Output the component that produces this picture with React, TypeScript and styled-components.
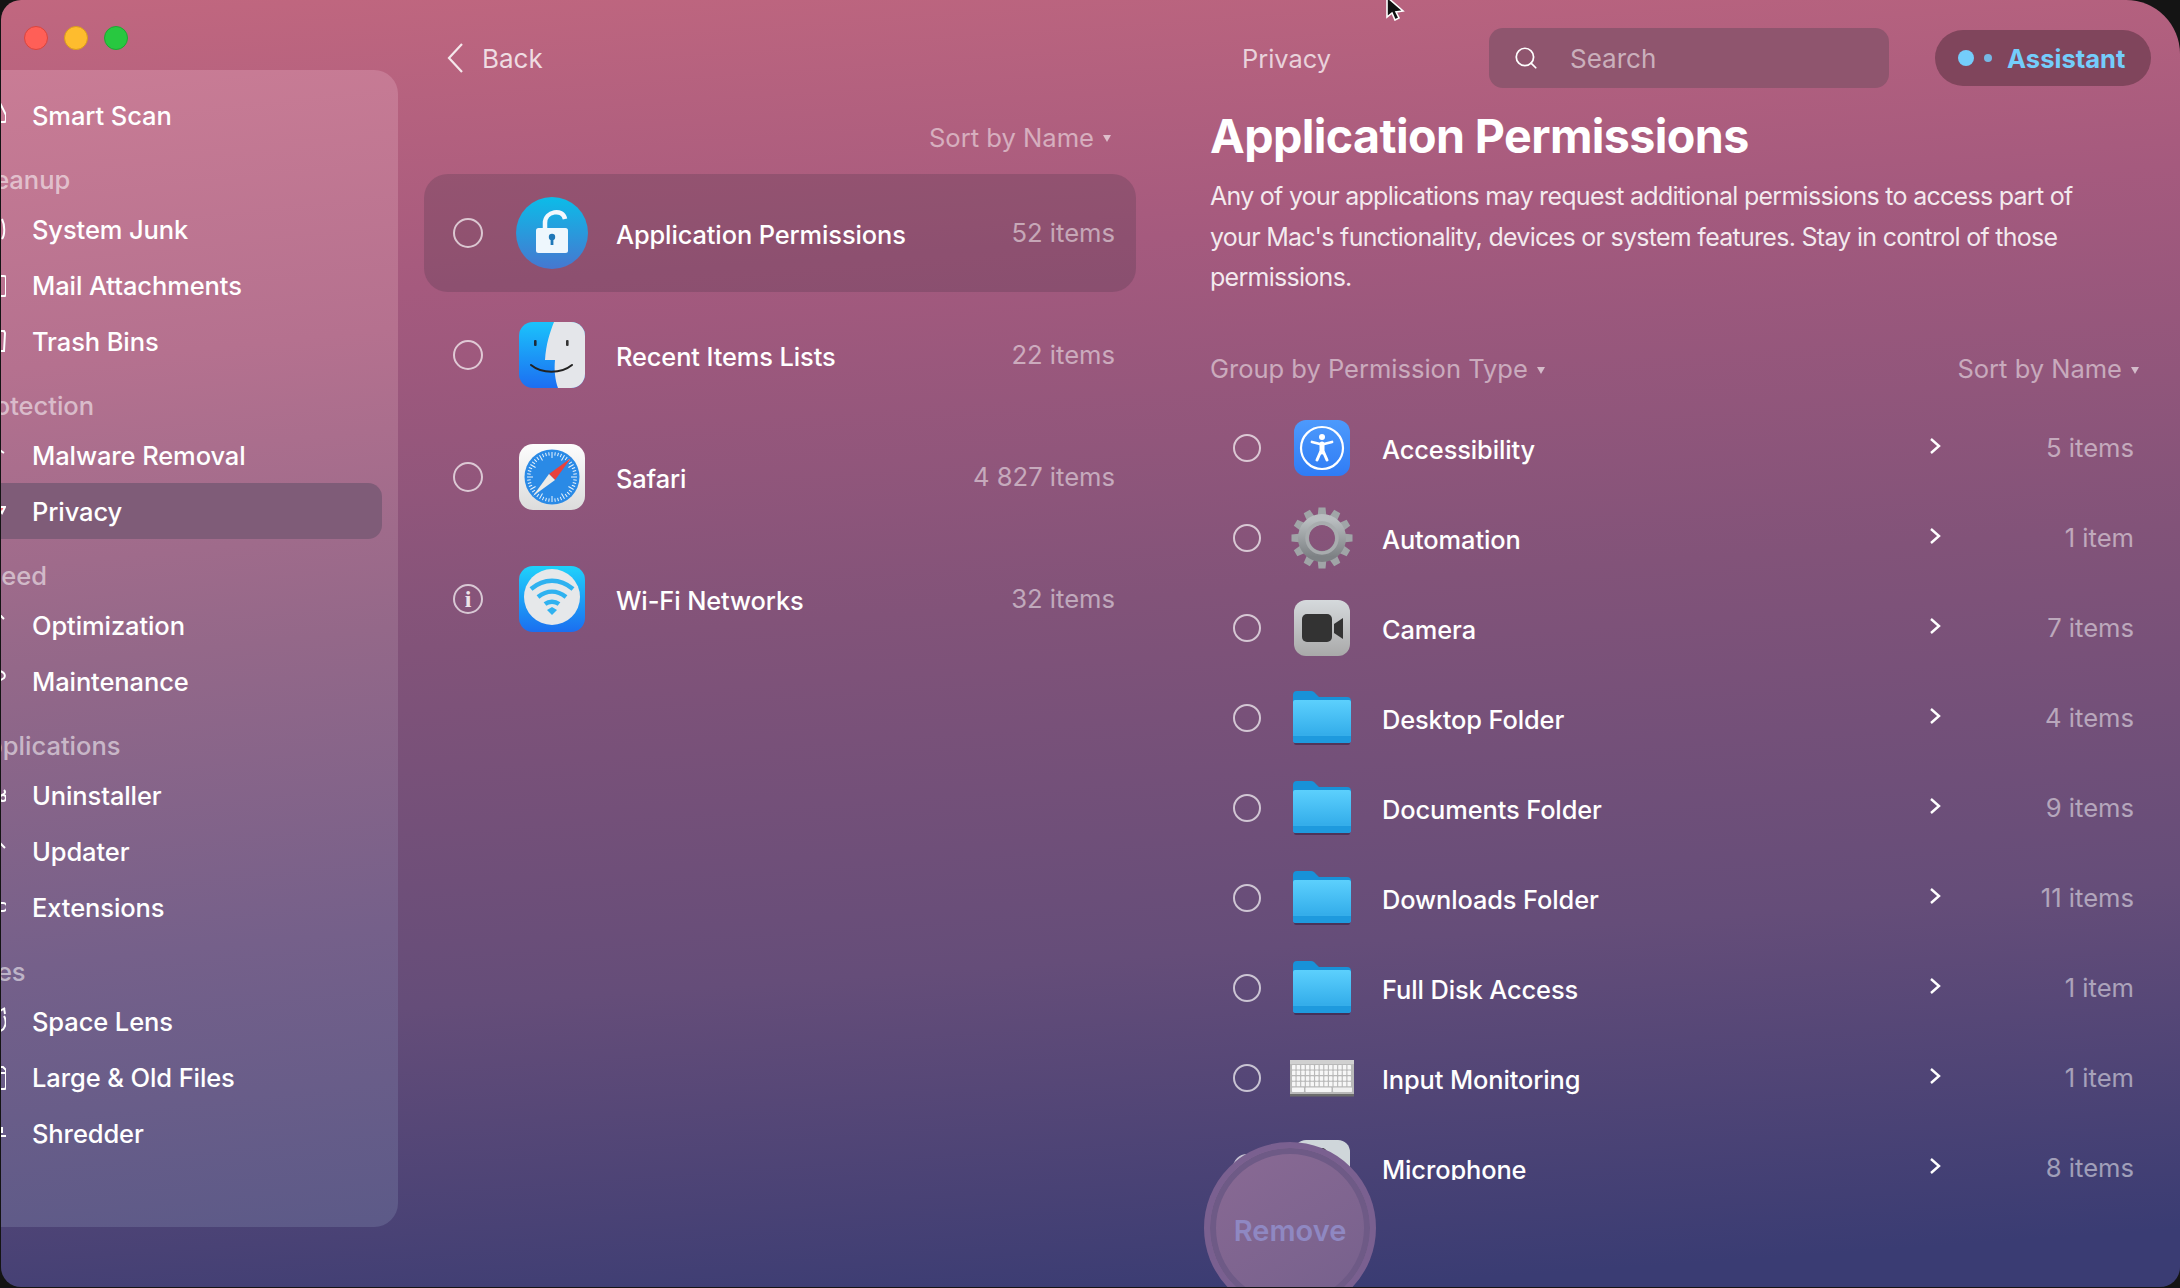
import React from "react";
import styled, { createGlobalStyle } from "styled-components";
import { Search as SearchGlyph } from "lucide-react";

const GlobalStyle = createGlobalStyle`
	html, body {
		margin: 0;
		padding: 0;
		background: #141414;
	}
	body {
		font-family: Inter, "Liberation Sans", sans-serif;
		-webkit-font-smoothing: antialiased;
	}
`;

const Page = styled.div`
	width: 2180px;
	height: 1288px;
	overflow: hidden;
	background: #141414;
`;

const Window = styled.div`
	position: relative;
	margin-left: 1px;
	width: 2179px;
	height: 1287px;
	display: grid;
	grid-template-columns: 397px 738px 1fr;
	overflow: hidden;
	border-radius: 20px 54px 20px 20px;
	background: linear-gradient(176deg, #c1677f 0%, #a55a7e 22%, #825379 47%, #654d79 72%, #3a3c73 96%);
`;

const LeftColumn = styled.div`
	display: flex;
	flex-direction: column;
`;

const TrafficRow = styled.div`
	height: 70px;
	display: flex;
	gap: 16px;
	padding: 26px 0 0 23px;
	box-sizing: border-box;
`;

const Light = styled.span<{ $color: string; $edge: string }>`
	width: 24px;
	height: 24px;
	border-radius: 50%;
	box-sizing: border-box;
	background: ${(p) => p.$color};
	border: 1px solid ${(p) => p.$edge};
`;

const Sidebar = styled.nav`
	height: 1157px;
	margin-left: -1px;
	padding-top: 17px;
	box-sizing: border-box;
	overflow: hidden;
	border-radius: 0 24px 24px 0;
	background: linear-gradient(174deg, #c97c95 0%, #b5718f 25%, #946889 50%, #75608a 75%, #5c5a88 100%);
`;

const SideSection = styled.div`
	height: 44px;
	margin: 14px 0 0 -31px;
	display: flex;
	align-items: center;
	font-size: 25.5px;
	font-weight: 500;
	color: rgba(255, 255, 255, 0.55);
`;

const SideItem = styled.div<{ $active?: boolean }>`
	height: 56px;
	width: 382px;
	display: flex;
	align-items: center;
	gap: 26px;
	box-sizing: border-box;
	border-radius: 0 14px 14px 0;
	font-size: 25.5px;
	font-weight: 500;
	letter-spacing: -0.1px;
	color: #fff;
	background: ${(p) => (p.$active ? "#7f5c78" : "transparent")};
`;

const SideIcon = styled.svg`
	margin-left: -30px;
	width: 36px;
	height: 36px;
	flex: none;
	fill: none;
	stroke: #fff;
	stroke-width: 2;
`;

const MiddleColumn = styled.section`
	margin-left: 26px;
	width: 712px;
	display: flex;
	flex-direction: column;
`;

const BackRow = styled.div`
	margin-top: 28px;
	height: 60px;
	display: flex;
	align-items: center;
	gap: 19px;
	padding-left: 23px;
	font-size: 26px;
	color: rgba(255, 255, 255, 0.78);
`;

const BackChevron = styled.svg`
	flex: none;
	fill: none;
	stroke: rgba(255, 255, 255, 0.85);
	stroke-width: 2.2;
`;

const SortRow = styled.div`
	margin-top: 28px;
	height: 42px;
	display: flex;
	justify-content: flex-end;
	align-items: center;
	gap: 9px;
	padding-right: 25px;
	font-size: 25.6px;
	color: rgba(255, 255, 255, 0.5);
`;

const Caret = styled.span`
	width: 0;
	height: 0;
	border-left: 4px solid transparent;
	border-right: 4px solid transparent;
	border-top: 7px solid rgba(255, 255, 255, 0.6);
	margin-top: 3px;
`;

const AppList = styled.div`
	margin-top: 16px;
	display: flex;
	flex-direction: column;
	gap: 4px;
`;

const AppRow = styled.div<{ $active?: boolean }>`
	height: 118px;
	display: flex;
	align-items: center;
	box-sizing: border-box;
	padding: 0 21px 0 29px;
	border-radius: 24px;
	background: ${(p) => (p.$active ? "rgba(70, 50, 70, 0.25)" : "transparent")};
`;

const Radio = styled.span<{ $size: number }>`
	width: ${(p) => p.$size}px;
	height: ${(p) => p.$size}px;
	flex: none;
	box-sizing: border-box;
	border: 2px solid rgba(255, 255, 255, 0.68);
	border-radius: 50%;
`;

const InfoMark = styled(Radio)`
	display: flex;
	align-items: center;
	justify-content: center;
	font-family: "Liberation Serif", serif;
	font-size: 24px;
	font-weight: 700;
	color: rgba(255, 255, 255, 0.85);
`;

const AppIconSlot = styled.div`
	width: 72px;
	height: 72px;
	flex: none;
	margin: 0 28px 0 33px;
	svg {
		display: block;
	}
`;

const AppName = styled.span`
	flex: 1;
	padding-top: 2px;
	font-size: 25.4px;
	font-weight: 500;
	letter-spacing: -0.1px;
	color: #fff;
`;

const Count = styled.span`
	margin-top: -1px;
	font-size: 25.6px;
	color: rgba(255, 255, 255, 0.5);
`;

const RightColumn = styled.section`
	margin-left: 74px;
	display: flex;
	flex-direction: column;
	min-width: 0;
`;

const TopBar = styled.header`
	margin-top: 28px;
	height: 60px;
	display: flex;
	align-items: center;
`;

const BarTitle = styled.span`
	margin-left: 32px;
	width: 247px;
	flex: none;
	font-size: 25.4px;
	color: rgba(255, 255, 255, 0.72);
`;

const SearchBox = styled.div`
	width: 400px;
	height: 60px;
	flex: none;
	display: flex;
	align-items: center;
	gap: 31px;
	padding-left: 24px;
	box-sizing: border-box;
	border-radius: 14px;
	font-size: 26px;
	color: rgba(255, 255, 255, 0.55);
	background: #8f556e;
`;

const AssistantPill = styled.div`
	margin-left: 46px;
	width: 216px;
	height: 56px;
	flex: none;
	display: flex;
	align-items: center;
	box-sizing: border-box;
	padding-left: 23px;
	border-radius: 28px;
	font-size: 25.6px;
	font-weight: 700;
	color: #74cdfb;
	background: #80455c;
`;

const BigDot = styled.span`
	width: 16px;
	height: 16px;
	border-radius: 50%;
	background: #74cdfb;
`;

const SmallDot = styled.span`
	width: 8px;
	height: 8px;
	margin: 0 15px 0 10px;
	border-radius: 50%;
	background: #74cdfb;
	opacity: 0.85;
`;

const Title = styled.h1`
	margin: 20px 0 0;
	height: 56px;
	line-height: 56px;
	font-size: 46.6px;
	font-weight: 700;
	letter-spacing: -0.6px;
	color: #fff;
`;

const Intro = styled.p`
	margin: 12px 0 0;
	width: 880px;
	font-size: 25px;
	line-height: 40.5px;
	letter-spacing: -0.72px;
	color: rgba(255, 255, 255, 0.88);
`;

const GroupRow = styled.div`
	margin-top: 51px;
	height: 40px;
	display: flex;
	align-items: center;
	gap: 9px;
	padding-right: 41px;
	font-size: 25.5px;
	color: rgba(255, 255, 255, 0.5);
`;

const GroupSort = styled.div`
	margin-left: auto;
	display: flex;
	align-items: center;
	gap: 9px;
`;

const PermissionList = styled.div`
	margin-top: 14px;
	height: 777px;
	overflow: hidden;
`;

const PermissionRow = styled.div`
	height: 90px;
	display: flex;
	align-items: center;
	box-sizing: border-box;
	padding: 0 46px 0 23px;
`;

const PermissionIconSlot = styled.div`
	width: 64px;
	height: 64px;
	flex: none;
	margin: 0 28px 0 29px;
	display: flex;
	align-items: center;
	justify-content: center;
	svg {
		display: block;
	}
`;

const PermissionName = styled(AppName)`
	padding-top: 3px;
`;

const RowChevron = styled.svg`
	flex: none;
	margin: -3px 3px 0 0;
	fill: none;
	stroke: #fff;
	stroke-width: 2.4;
`;

const PermissionCount = styled(Count)`
	width: 190px;
	flex: none;
	text-align: right;
`;

const RemoveButton = styled.button`
	position: absolute;
	left: 1203px;
	top: 1142px;
	width: 172px;
	height: 172px;
	box-sizing: border-box;
	border: 6px solid #7a6090;
	border-radius: 50%;
	padding: 5px 0 0;
	font-family: Inter, "Liberation Sans", sans-serif;
	font-size: 29px;
	font-weight: 600;
	color: #8f88c2;
	background: linear-gradient(150deg, #8a6a94 0%, #75608c 100%);
	box-shadow: inset 0 0 0 6px #6e5a86;
`;

const Cursor = styled.svg`
	position: absolute;
	left: 1383px;
	top: -3px;
`;

const LockIcon = () => (
	<svg width="72" height="72" viewBox="0 0 72 72">
		<defs>
			<linearGradient id="lockBg" x1="0" y1="0" x2="0" y2="1">
				<stop offset="0" stopColor="#0cbce8" />
				<stop offset="1" stopColor="#4677d0" />
			</linearGradient>
		</defs>
		<circle cx="36" cy="36" r="36" fill="url(#lockBg)" />
		<path d="M29 34v-8c0-12 18-15 20-4" fill="none" stroke="#f2f8fd" strokeWidth="4.5" />
		<rect x="20" y="31" width="32" height="25" rx="2.5" fill="#eef7fd" />
		<circle cx="36" cy="40" r="3.2" fill="#1f78b8" />
		<rect x="34.6" y="40" width="2.8" height="8" fill="#1f78b8" />
	</svg>
);

const FinderIcon = () => (
	<svg width="72" height="72" viewBox="0 0 72 72">
		<defs>
			<linearGradient id="finderBlue" x1="0" y1="0" x2="0" y2="1">
				<stop offset="0" stopColor="#1bc3fb" />
				<stop offset="1" stopColor="#1c6ef2" />
			</linearGradient>
			<clipPath id="finderClip">
				<rect x="3" y="3" width="66" height="66" rx="14" />
			</clipPath>
		</defs>
		<g clipPath="url(#finderClip)">
			<rect x="3" y="3" width="66" height="66" fill="url(#finderBlue)" />
			<path d="M38 3c-4 10-8 22-9 38h10c-1 10 0 20 3 28h27V3z" fill="#e4e6ea" />
		</g>
		<rect x="18" y="21" width="2.6" height="6" rx="1" fill="#1d2b3a" />
		<rect x="50" y="21" width="2.6" height="6" rx="1" fill="#333" />
		<path d="M15 46c11 9 30 9 41 0" fill="none" stroke="#222" strokeWidth="2" strokeLinecap="round" />
	</svg>
);

const SafariIcon = () => (
	<svg width="72" height="72" viewBox="0 0 72 72">
		<defs>
			<linearGradient id="safariTile" x1="0" y1="0" x2="0" y2="1">
				<stop offset="0" stopColor="#fdfdfd" />
				<stop offset="1" stopColor="#dcdcdc" />
			</linearGradient>
		</defs>
		<rect x="3" y="3" width="66" height="66" rx="14" fill="url(#safariTile)" />
		<circle cx="36" cy="36" r="27.5" fill="#2a8ae6" />
		{Array.from({ length: 48 }).map((_, i) => (
			<line
				key={i}
				x1="36"
				y1="11"
				x2="36"
				y2={i % 4 === 0 ? 17 : 14.5}
				stroke="#e9f3fc"
				strokeWidth="1"
				transform={`rotate(${i * 7.5} 36 36)`}
			/>
		))}
		<path d="M55 17L39 39 33 33z" fill="#e8413c" />
		<path d="M17 55L33 33 39 39z" fill="#ecebe8" />
	</svg>
);

const WifiIcon = () => (
	<svg width="72" height="72" viewBox="0 0 72 72">
		<defs>
			<linearGradient id="wifiTile" x1="0" y1="0" x2="0" y2="1">
				<stop offset="0" stopColor="#1fd2fb" />
				<stop offset="1" stopColor="#1b6ef0" />
			</linearGradient>
		</defs>
		<rect x="3" y="3" width="66" height="66" rx="14" fill="url(#wifiTile)" />
		<circle cx="36" cy="34" r="28" fill="#e6e8ea" />
		<g fill="none" stroke="#2fb2f0" strokeWidth="4.5">
			<path d="M15 26c13-11 29-11 42 0" />
			<path d="M22 34c9-7 19-7 28 0" />
			<path d="M29 41c4-3 10-3 14 0" />
		</g>
		<path d="M31 47l5-3 5 3-5 5z" fill="#2fb2f0" />
	</svg>
);

const AccessibilityIcon = () => (
	<svg width="56" height="56" viewBox="0 0 56 56">
		<defs>
			<linearGradient id="a11yTile" x1="0" y1="0" x2="0" y2="1">
				<stop offset="0" stopColor="#4d9afc" />
				<stop offset="1" stopColor="#2f7cf5" />
			</linearGradient>
		</defs>
		<rect width="56" height="56" rx="12" fill="url(#a11yTile)" />
		<circle cx="28" cy="28" r="21" fill="none" stroke="#fff" strokeWidth="2.2" />
		<circle cx="28" cy="17" r="3" fill="#fff" />
		<g fill="none" stroke="#fff" strokeLinecap="round" strokeLinejoin="round">
			<path d="M18 22l10 2.5L38 22" strokeWidth="2.8" />
			<path d="M28 24v8" strokeWidth="5" />
			<path d="M26.5 32L23 40M29.5 32L33 40" strokeWidth="3" />
		</g>
	</svg>
);

const GearIcon = () => (
	<svg width="64" height="64" viewBox="0 0 64 64">
		<defs>
			<linearGradient id="gearFill" x1="0" y1="0" x2="0" y2="1">
				<stop offset="0" stopColor="#b9bec0" />
				<stop offset="1" stopColor="#7d8184" />
			</linearGradient>
		</defs>
		{Array.from({ length: 12 }).map((_, i) => (
			<path key={i} d="M28.5 1.5h7l1 10h-9z" fill="#a0a5a7" transform={`rotate(${i * 30} 32 32)`} />
		))}
		<circle cx="32" cy="32" r="18.5" fill="none" stroke="url(#gearFill)" strokeWidth="11" />
		<circle cx="32" cy="32" r="15" fill="none" stroke="#a8acae" strokeWidth="3.5" />
	</svg>
);

const CameraIcon = () => (
	<svg width="56" height="56" viewBox="0 0 56 56">
		<defs>
			<linearGradient id="cameraTile" x1="0" y1="0" x2="0" y2="1">
				<stop offset="0" stopColor="#d5d9dc" />
				<stop offset="1" stopColor="#a9a9a9" />
			</linearGradient>
		</defs>
		<rect width="56" height="56" rx="12" fill="url(#cameraTile)" />
		<rect x="8" y="14" width="30" height="28" rx="5" fill="#333" />
		<path d="M40 24l9-6v21l-9-6z" fill="#333" />
	</svg>
);

const FolderIcon = ({ id }: { id: string }) => (
	<svg width="60" height="56" viewBox="0 0 60 56">
		<defs>
			<linearGradient id={id} x1="0" y1="0" x2="0" y2="1">
				<stop offset="0" stopColor="#5cd0fd" />
				<stop offset="1" stopColor="#2aa5e6" />
			</linearGradient>
		</defs>
		<rect x="2" y="50" width="56" height="5" rx="2" fill="rgba(40,20,50,0.45)" />
		<path d="M1 5a4 4 0 014-4h14a5 5 0 013 1l5 5h28a4 4 0 014 4v10H1z" fill="#1892d8" />
		<path d="M1 12a2 2 0 012-2h54a2 2 0 012 2v38a3 3 0 01-3 3H4a3 3 0 01-3-3z" fill={`url(#${id})`} />
		<rect x="1" y="43" width="58" height="10" rx="3" fill="#1e9ade" />
		<rect x="1" y="43" width="58" height="3" fill="#35aeea" />
	</svg>
);

const KeyboardIcon = () => (
	<svg width="64" height="40" viewBox="0 0 64 40">
		<rect x="0" y="2" width="64" height="36" rx="1.5" fill="#b9b9b9" />
		<rect x="0" y="2" width="64" height="4" fill="#d0d0d0" />
		<rect x="0" y="36" width="64" height="2.5" fill="#6c6c6c" />
		{[0, 1, 2, 3].map((r) =>
			Array.from({ length: 13 }).map((_, c) => (
				<rect key={`${r}-${c}`} x={2 + c * 4.62} y={7 + r * 5.6} width="3.5" height="4.5" rx="0.6" fill="#f7f7f7" />
			))
		)}
		<rect x="2" y="29.4" width="12" height="4.5" rx="0.6" fill="#f7f7f7" />
		<rect x="15.5" y="29.4" width="26" height="4.5" rx="0.6" fill="#f7f7f7" />
		<rect x="43" y="29.4" width="19" height="4.5" rx="0.6" fill="#f0f0f0" />
	</svg>
);

const MicIcon = () => (
	<svg width="56" height="56" viewBox="0 0 56 56">
		<rect width="56" height="56" rx="12" fill="#cfd6da" />
		<rect x="23" y="8" width="10" height="24" rx="5" fill="#333" />
	</svg>
);

const sideIconPaths: Record<string, React.ReactNode> = {
	scan: <path d="M30 6l6 12v5a2 2 0 01-2 2h-6" />,
	junk: <path d="M32 8c3 6 3 16 0 20" />,
	mail: <path d="M28 9h6a2 2 0 012 2v16a2 2 0 01-2 2h-6" />,
	trash: <path d="M28 8h6l1 2-1 18h-6" />,
	malware: <path d="M28 16l3-2 3 2" />,
	privacy: <path d="M28 14h7l-3 6z" fill="#f5677a" stroke="#fff" />,
	optimize: <path d="M30 8l4 4" />,
	maintain: <path d="M28 8c6 0 8 4 6 7l-5 3" />,
	uninstall: <path d="M33 18a3 3 0 100 6 3 3 0 000-6zm-1 0c3-1 4-3 2-5" />,
	updater: <path d="M28 14l3-3 4 4" />,
	extension: <path d="M28 14h5a4 4 0 010 8h-5" />,
	lens: <path d="M30 8l5-3m-1 8c3 5 2 13-4 15M34 5l1 6" />,
	files: <path d="M28 8h5l3 3v17a2 2 0 01-2 2h-6M28 14h8" />,
	shredder: <path d="M32 12v6M28 21h8" />,
};

const SideRow = ({ icon, label, active }: { icon: string; label: string; active?: boolean }) => (
	<SideItem $active={active}>
		<SideIcon viewBox="0 0 36 36">{sideIconPaths[icon]}</SideIcon>
		{label}
	</SideItem>
);

const sideGroups = [
	{ title: "", items: [["scan", "Smart Scan"]] },
	{ title: "Cleanup", items: [["junk", "System Junk"], ["mail", "Mail Attachments"], ["trash", "Trash Bins"]] },
	{ title: "Protection", items: [["malware", "Malware Removal"], ["privacy", "Privacy"]] },
	{ title: "Speed", items: [["optimize", "Optimization"], ["maintain", "Maintenance"]] },
	{ title: "Applications", items: [["uninstall", "Uninstaller"], ["updater", "Updater"], ["extension", "Extensions"]] },
	{ title: "Files", items: [["lens", "Space Lens"], ["files", "Large & Old Files"], ["shredder", "Shredder"]] },
];

const apps = [
	{ name: "Application Permissions", count: "52 items", icon: <LockIcon />, active: true },
	{ name: "Recent Items Lists", count: "22 items", icon: <FinderIcon /> },
	{ name: "Safari", count: "4 827 items", icon: <SafariIcon /> },
	{ name: "Wi-Fi Networks", count: "32 items", icon: <WifiIcon />, info: true },
];

const permissions = [
	{ name: "Accessibility", count: "5 items", icon: <AccessibilityIcon /> },
	{ name: "Automation", count: "1 item", icon: <GearIcon /> },
	{ name: "Camera", count: "7 items", icon: <CameraIcon /> },
	{ name: "Desktop Folder", count: "4 items", icon: <FolderIcon id="folderA" /> },
	{ name: "Documents Folder", count: "9 items", icon: <FolderIcon id="folderB" /> },
	{ name: "Downloads Folder", count: "11 items", icon: <FolderIcon id="folderC" /> },
	{ name: "Full Disk Access", count: "1 item", icon: <FolderIcon id="folderD" /> },
	{ name: "Input Monitoring", count: "1 item", icon: <KeyboardIcon /> },
	{ name: "Microphone", count: "8 items", icon: <MicIcon /> },
];

const App = () => {
	return (
		<Page>
			<GlobalStyle />
			<Window>
				<LeftColumn>
					<TrafficRow>
						<Light $color="#ff5f57" $edge="#d9453e" />
						<Light $color="#febc2e" $edge="#d99c1c" />
						<Light $color="#28c840" $edge="#1fa732" />
					</TrafficRow>
					<Sidebar>
						{sideGroups.map((group) => (
							<React.Fragment key={group.title || "top"}>
								{group.title && <SideSection>{group.title}</SideSection>}
								{group.items.map(([icon, label]) => (
									<SideRow key={label} icon={icon} label={label} active={label === "Privacy"} />
								))}
							</React.Fragment>
						))}
					</Sidebar>
				</LeftColumn>

				<MiddleColumn>
					<BackRow>
						<BackChevron width="16" height="32" viewBox="0 0 16 32">
							<path d="M15 2L2 16l13 14" />
						</BackChevron>
						Back
					</BackRow>
					<SortRow>
						Sort by Name
						<Caret />
					</SortRow>
					<AppList>
						{apps.map((app) => (
							<AppRow key={app.name} $active={app.active}>
								{app.info ? <InfoMark $size={30}>i</InfoMark> : <Radio $size={30} />}
								<AppIconSlot>{app.icon}</AppIconSlot>
								<AppName>{app.name}</AppName>
								<Count>{app.count}</Count>
							</AppRow>
						))}
					</AppList>
				</MiddleColumn>

				<RightColumn>
					<TopBar>
						<BarTitle>Privacy</BarTitle>
						<SearchBox>
							<SearchGlyph size={26} strokeWidth={1.6} color="#fff" />
							Search
						</SearchBox>
						<AssistantPill>
							<BigDot />
							<SmallDot />
							Assistant
						</AssistantPill>
					</TopBar>
					<Title>Application Permissions</Title>
					<Intro>
						Any of your applications may request additional permissions to access part of your
						Mac's functionality, devices or system features. Stay in control of those permissions.
					</Intro>
					<GroupRow>
						Group by Permission Type
						<Caret />
						<GroupSort>
							Sort by Name
							<Caret />
						</GroupSort>
					</GroupRow>
					<PermissionList>
						{permissions.map((perm) => (
							<PermissionRow key={perm.name}>
								<Radio $size={28} />
								<PermissionIconSlot>{perm.icon}</PermissionIconSlot>
								<PermissionName>{perm.name}</PermissionName>
								<RowChevron width="12" height="18" viewBox="0 0 12 18">
									<path d="M2 2l8 7-8 7" />
								</RowChevron>
								<PermissionCount>{perm.count}</PermissionCount>
							</PermissionRow>
						))}
					</PermissionList>
				</RightColumn>

				<RemoveButton>Remove</RemoveButton>
				<Cursor width="26" height="24" viewBox="0 0 26 24">
					<path d="M3 0l0 20 5-4 3 7 4-2-3-6 7-1z" fill="#111" stroke="#fff" strokeWidth="1.6" />
				</Cursor>
			</Window>
		</Page>
	);
};

export default App;
